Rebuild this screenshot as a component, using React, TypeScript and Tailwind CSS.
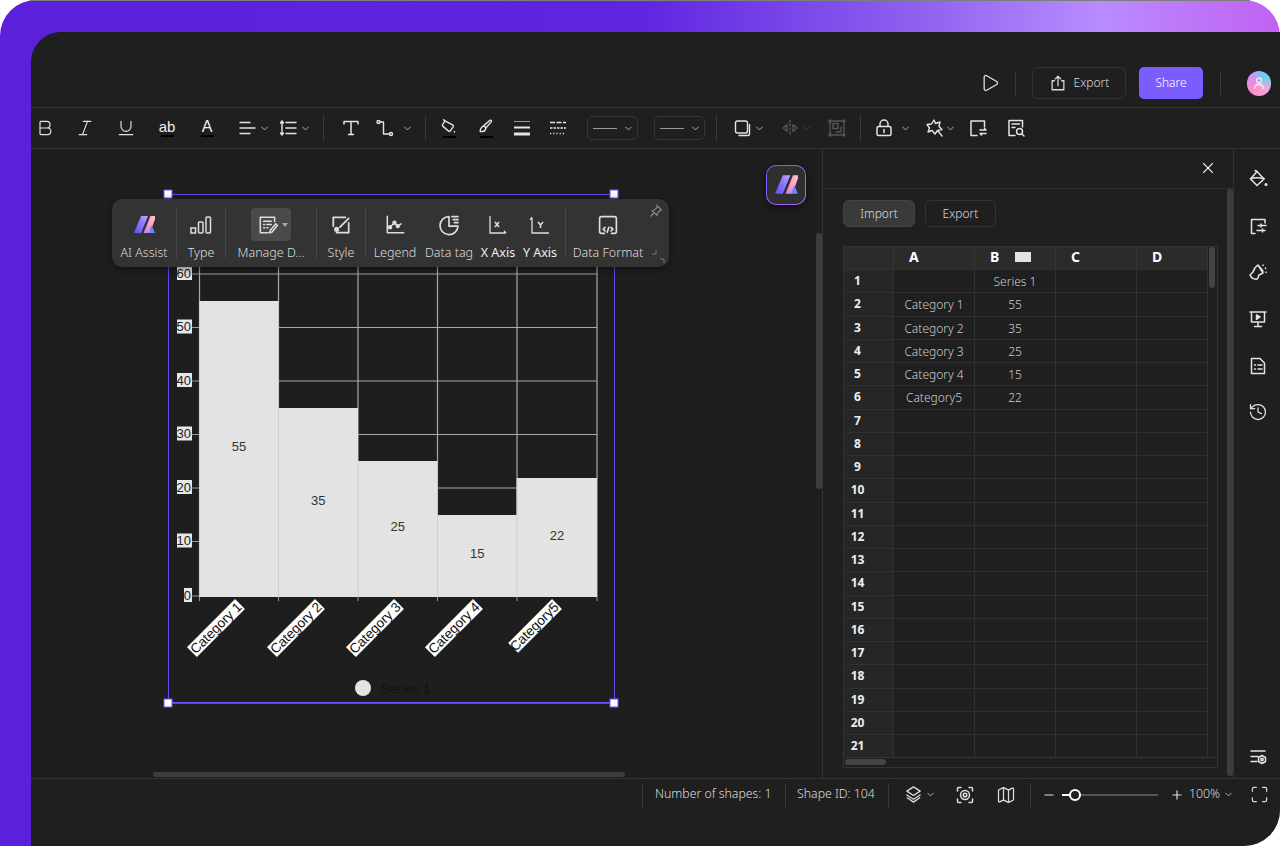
import React from "react";
import { Bold, Italic, Underline, ChevronDown, Play, X, History, Map as MapIcon, Plus, Minus, Maximize } from "lucide-react";

type P = { className?: string; children?: React.ReactNode; size?: number; sw?: number };
const S = ({ className = "", children, size = 20, sw = 1.4 }: P) => (
  <svg width={size} height={size} viewBox="0 0 20 20" fill="none" stroke="currentColor" strokeWidth={sw} strokeLinecap="round" strokeLinejoin="round" className={`shrink-0 ${className}`}>
    {children}
  </svg>
);
const Chev = ({ className = "" }: { className?: string }) => <ChevronDown size={11} strokeWidth={1.6} className={`shrink-0 ${className}`} />;

const Logo = ({ size = 24, id }: { size?: number; id: string }) => (
  <svg width={size} height={size} viewBox="4 4 24 24" className="shrink-0">
    <defs>
      <linearGradient id={`${id}a`} x1="0" y1="1" x2="1" y2="0"><stop offset="0" stopColor="#5a55f5" /><stop offset="0.6" stopColor="#8f7bff" /><stop offset="1" stopColor="#c9a4ff" /></linearGradient>
      <linearGradient id={`${id}b`} x1="0" y1="1" x2="1" y2="0"><stop offset="0" stopColor="#c47bf0" /><stop offset="0.5" stopColor="#ff9fc4" /><stop offset="1" stopColor="#ffc0cf" /></linearGradient>
    </defs>
    <polygon points="6,24 13,7 20,7 13,24" fill={`url(#${id}a)`} />
    <polygon points="15.500,24 22.500,7 27,7 27,10 22,24" fill={`url(#${id}b)`} />
    <polygon points="23.500,16 27,24 20.500,24" fill="#6d86ff" />
  </svg>
);

const Bar = ({ className = "" }: { className?: string }) => <div className={`w-px h-6 bg-[#3a3a3a] shrink-0 ${className}`} />;

function TopToolbar() {
  return (
    <div className="h-[41px] shrink-0 border-b border-[#333] flex items-center text-[#e4e4e4]">
      <Bold size={20} strokeWidth={1.4} className="ml-[4px] shrink-0" />
      <Italic size={20} strokeWidth={1.4} className="ml-[20px] shrink-0" />
      <Underline size={20} strokeWidth={1.4} className="ml-[21px] shrink-0" />
      <div className="ml-[21px] w-5 flex flex-col items-center shrink-0">
        <span className="text-[15px] leading-[15px] font-['Liberation_Sans',sans-serif] text-[#eee]">ab</span>
        <span className="w-[13px] h-[2px] bg-black mt-[1px]" />
      </div>
      <div className="ml-[20px] w-5 flex flex-col items-center shrink-0">
        <span className="text-[16px] leading-[15px] font-['Liberation_Sans',sans-serif] font-light text-[#eee]">A</span>
        <span className="w-[13px] h-[2px] bg-black mt-[1px]" />
      </div>
      <S className="ml-[21px]"><path d="M2 4.500h10M2 10h15M2 15.500h10" /></S>
      <Chev className="ml-[1px]" />
      <S className="ml-[8px]"><path d="M8 4.500h10M8 10h10M8 15.500h10M4 3v14M2.500 5 4 3l1.500 2M2.500 15 4 17l1.500-2" /></S>
      <Chev className="ml-[2px]" />
      <Bar className="ml-[12px]" />
      <S className="ml-[17px]" sw={1.5}><path d="M3 6V3.500h14V6M10 3.500v13M7.500 16.500h5" /></S>
      <S className="ml-[14px]"><circle cx="3.500" cy="4" r="1.500" /><circle cx="16" cy="16" r="1.500" /><path d="M5 4h3.500v12H14.500" /></S>
      <Chev className="ml-[7px]" />
      <Bar className="ml-[12px]" />
      <div className="ml-[13px] w-5 flex flex-col items-center shrink-0">
        <S size={18} sw={1.6}><path d="M6 3.500 14.500 8c.5.500.5 1 .2 1.500l-3.500 5c-.5.500-1 .5-1.500.2L3 9c-.5-.5-.5-1-.2-1.500L5 4c.2-.5.5-.7 1-.5zM6 3.500 4 2M16 15v.5" /></S>
        <span className="w-[13px] h-[2px] bg-black" />
      </div>
      <div className="ml-[17px] w-5 flex flex-col items-center shrink-0">
        <S size={18} sw={1.6}><path d="M14.500 2.500c1-.5 2 .5 1.500 1.500L10 11 7.500 8.500zM7.500 8.500 5 10.500c-1 1-1.500 2.500-1.500 4.500h3c1.500 0 3-1.500 3.500-4" /></S>
        <span className="w-[13px] h-[2px] bg-black" />
      </div>
      <svg width="20" height="20" viewBox="0 0 20 20" className="ml-[16px] shrink-0" fill="#e4e4e4"><rect x="2" y="3" width="16" height="1" fill="#999" /><rect x="2" y="8.500" width="16" height="2" /><rect x="2" y="14.500" width="16" height="3" /></svg>
      <svg width="20" height="20" viewBox="0 0 20 20" className="ml-[16px] shrink-0" fill="none" stroke="#e4e4e4"><path d="M2 4.500h16" strokeDasharray="5 1.500" strokeWidth="1.500" /><path d="M2 10h16" strokeDasharray="2.500 1" strokeWidth="1.500" /><path d="M2 15.500h16" strokeDasharray="1.200 2" strokeWidth="1.500" /></svg>
      <div className="ml-[19px] w-[51px] h-[24px] rounded-[5px] border border-[#353535] flex items-center justify-between pl-[5px] pr-[3px] shrink-0">
        <span className="w-[24px] h-px bg-[#999]" /><Chev />
      </div>
      <div className="ml-[16px] w-[51px] h-[24px] rounded-[5px] border border-[#353535] flex items-center justify-between pl-[5px] pr-[3px] shrink-0">
        <span className="w-[24px] h-px bg-[#999]" /><Chev />
      </div>
      <Bar className="ml-[11px]" />
      <S className="ml-[16px]"><rect x="2.500" y="3" width="12" height="12" rx="2" /><path d="M16.500 6.500V16a1.500 1.500 0 0 1-1.500 1.500H6" /></S>
      <Chev className="ml-[1px] mr-[15px]" />
      <S className="text-[#555]"><path d="M10 2v16" strokeDasharray="2 2" /><path d="M7 6.500v7L3 10zM13 6.500v7l4-3.500z" /></S>
      <Chev className="ml-[1px] text-[#555]" />
      <S className="ml-[15px] text-[#555]"><rect x="3" y="3" width="14" height="14" /><rect x="6" y="5.500" width="5" height="5" /><path d="M14 9v5H9" /><circle cx="3" cy="3" r="1" /><circle cx="17" cy="3" r="1" /><circle cx="3" cy="17" r="1" /><circle cx="17" cy="17" r="1" /></S>
      <Bar className="ml-[13px]" />
      <S className="ml-[13px]" sw={1.5}><rect x="3" y="8.500" width="14" height="9" rx="1.500" /><path d="M6 8.500V6a4 4 0 0 1 8 0v2.500M10 11.500v3" /></S>
      <Chev className="ml-[6px]" />
      <S className="ml-[14px]"><path d="m9 2 1.500 3.500L15 4l-1 4.500 3 3-4.500 1L10 16l-3-3.500L3 14l1.500-4L2 6.500l4.500-.5zM13 13l4 5" /></S>
      <Chev />
      <S className="ml-[12px]" sw={1.5}><path d="M16.500 9V3H3v14.500h6M12 12h6l-1.500-1.500M18 15.500h-6l1.500 1.500" /></S>
      <S className="ml-[18px]" sw={1.5}><path d="M9 17.500H3V2.500h13.500V9M6 6h7.500M6 9.500h3" /><circle cx="13.500" cy="13.500" r="3" /><path d="m16 16 2 2" /></S>
    </div>
  );
}

function FloatTool({ w, label, children, strong }: { w: string; label: string; children: React.ReactNode; strong?: boolean }) {
  return (
    <div className={`${w} flex flex-col items-center shrink-0`}>
      <div className="h-[33px] flex items-center justify-center">{children}</div>
      <span className={`mt-[3px] text-[12.500px] leading-[17px] whitespace-nowrap ${strong ? "font-normal text-[#eee]" : "font-light text-[#ddd]"}`}>{label}</span>
    </div>
  );
}

function FloatBar() {
  const d = <div className="w-px h-[50px] bg-[#474747] shrink-0" />;
  return (
    <div className="absolute left-[81px] top-[50px] w-[557px] h-[68px] rounded-[10px] bg-[#333333] shadow-[0_2px_8px_rgba(0,0,0,0.5)] flex items-start pt-[9px] text-[#ddd]">
      <FloatTool w="w-[64px]" label="AI Assist"><Logo id="f" size={24} /></FloatTool>
      {d}
      <FloatTool w="w-[48px]" label="Type">
        <svg width="24" height="24" viewBox="0 0 24 24" fill="none" stroke="currentColor" strokeWidth="1.500"><rect x="2" y="15" width="4.500" height="5" /><rect x="9.500" y="9" width="4.500" height="11" rx="1" /><rect x="17" y="4" width="4.500" height="16" rx="1" /></svg>
      </FloatTool>
      {d}
      <FloatTool w="w-[90px]" label="Manage D...">
        <div className="w-[40px] h-[33px] rounded-[4px] bg-[#4a4a4a] flex items-center pl-[6px] gap-[3px]">
          <S size={22}><path d="M16 7V3H3v14h7M6 6.500h7M6 9.500h1M9 9.500h4M6 12.500h1M9 12.500h1M12 15l5-6 1.500 1.500-5 6-2 .5z" /></S>
          <svg width="6" height="4" viewBox="0 0 6 4" fill="#aaa"><path d="M0 0h6L3 4z" /></svg>
        </div>
      </FloatTool>
      {d}
      <FloatTool w="w-[48px]" label="Style">
        <S size={22} sw={1.6}><path d="M14 3H3v8M6 17h11V8M17 4 9 12" /><circle cx="6" cy="14" r="1.500" fill="currentColor" /></S>
      </FloatTool>
      {d}
      <FloatTool w="w-[58px]" label="Legend">
        <S size={22}><path d="M3 2v15h15" /><path d="m5.500 12 4-4 3 3 3-2" /><circle cx="5.500" cy="12" r="1.300" fill="currentColor" /><circle cx="9.500" cy="8" r="1.300" fill="currentColor" /><circle cx="12.500" cy="11" r="1.300" fill="currentColor" /></S>
      </FloatTool>
      <FloatTool w="w-[50px]" label="Data tag">
        <S size={24} sw={1.4}><path d="M10 3a7.500 7.500 0 1 0 7.500 8H10zM12.500 3h5M13.500 5.500h4M14.500 8h3" /></S>
      </FloatTool>
      <FloatTool w="w-[48px]" label="X Axis" strong>
        <svg width="22" height="22" viewBox="0 0 22 22" fill="none" stroke="currentColor" strokeWidth="1.300"><path d="M3 2v17h16M17 17l2 2" /><path d="m8 8 4 5M12 8l-4 5" strokeWidth="1.600" /></svg>
      </FloatTool>
      <FloatTool w="w-[36px]" label="Y Axis" strong>
        <svg width="22" height="22" viewBox="0 0 22 22" fill="none" stroke="currentColor" strokeWidth="1.300"><path d="M3 4v15h17M1 6l2-3" /><path d="m9 8 2.500 3L14 8M11.500 11v3" strokeWidth="1.600" /></svg>
      </FloatTool>
      <div className="w-[7px] shrink-0" />
      {d}
      <FloatTool w="w-[84px]" label="Data Format">
        <S size={24}><path d="M7 17H4.500C3.500 17 3 16.500 3 15.500V4.500C3 3.500 3.500 3 4.500 3H15.500C16.500 3 17 3.500 17 4.500V15.500C17 16.500 16.500 17 15.500 17H13" /><path d="m7.500 12-1.500 1.500L7.500 15M12.500 12l1.500 1.500-1.500 1.500M10.700 12l-1.400 4" /></S>
      </FloatTool>
      <svg width="14" height="14" viewBox="0 0 14 14" fill="none" stroke="#888" strokeWidth="1.100" className="absolute right-[6px] top-[5px]"><path d="m8 1.500 4.500 4.500-1.500.5-2.500 2.500-.5 2.500L3 6.500l2.500-.5L8 3.500zM5 9l-3.500 3.500" /></svg>
      <svg width="14" height="14" viewBox="0 0 14 14" fill="none" stroke="#777" strokeWidth="1" className="absolute right-[4px] bottom-[3px]"><path d="M1 4h4V0M13 13V9h-4" /></svg>
    </div>
  );
}

function Chart() {
  const ys: [number, number][] = [[60, 274], [50, 327.500], [40, 381], [30, 434.500], [20, 488], [10, 541.500], [0, 596]];
  const bars = [
    { x: 199.500, w: 79, top: 301, v: "55", c: "Category 1", lx: 240 },
    { x: 278.500, w: 79.500, top: 408, v: "35", c: "Category 2", lx: 320 },
    { x: 358, w: 79.500, top: 461, v: "25", c: "Category 3", lx: 399 },
    { x: 437.500, w: 79.500, top: 515, v: "15", c: "Category 4", lx: 478 },
    { x: 517, w: 80, top: 478, v: "22", c: "Category5", lx: 557 },
  ];
  const f = { fontFamily: "'Liberation Sans', sans-serif" };
  return (
    <svg width="460" height="524" viewBox="161 187 460 524" className="absolute left-[130px] top-[38px]" style={f}>
      <path d="M168.500 194.500H614.500V702.500H168.500Z" fill="none" stroke="#6548ea" strokeWidth="1" />
      <path d="M168.500 703H614.500" stroke="#6f55ff" strokeWidth="1.500" />
      {ys.slice(0, 6).map(([v, y]) => <line key={v} x1="199" x2="597" y1={y} y2={y} stroke="#a8a8a8" strokeWidth="1.200" />)}
      {[199.500, 278.500, 358, 437.500, 517, 597].map((x) => <line key={x} x1={x} x2={x} y1="267" y2="597" stroke="#a8a8a8" strokeWidth="1.200" />)}
      {bars.map((b) => (
        <g key={b.c}>
          <rect x={b.x} y={b.top} width={b.w} height={597 - b.top} fill="#e3e3e3" />
          <line x1={b.x} x2={b.x} y1={b.top} y2="597" stroke="#cfcfcf" />
          <text x={b.x + b.w / 2} y={b.top + (597 - b.top) / 2 + 2} textAnchor="middle" fontSize="13" fill="#333">{b.v}</text>
          <line x1={b.x} x2={b.x} y1="597" y2="601" stroke="#999" />
          <g transform={`translate(${b.lx} 604) rotate(-45)`}>
            <rect x={b.c.length === 10 ? -68 : -62} y="-7" width={b.c.length === 10 ? 68 : 62} height="14" fill="#fff" />
            <text x="-1" y="4.500" textAnchor="end" fontSize="13.500" fill="#111">{b.c}</text>
          </g>
        </g>
      ))}
      <line x1="597" x2="597" y1="597" y2="601" stroke="#999" />
      {ys.map(([v, y]) => (
        <g key={v}>
          <rect x={v === 0 ? 184 : 177} y={y - 8} width={v === 0 ? 8 : 15} height="14" fill="#e8e8e8" />
          <text x="191" y={y + 3.500} textAnchor="end" fontSize="13" fill="#222">{v}</text>
          <line x1="192" x2="199" y1={y} y2={y} stroke="#999" />
        </g>
      ))}
      <circle cx="363" cy="688" r="8" fill="#e4e4e4" />
      <text x="381" y="693" fontSize="13.500" fill="#111">Series 1</text>
      {[[168, 194], [614, 194], [168, 703], [614, 703]].map(([x, y]) => (
        <rect key={`${x}${y}`} x={x - 4} y={y - 4} width="8" height="8" fill="#fff" stroke="#6f55ff" strokeWidth="1" />
      ))}
    </svg>
  );
}

const rows: string[][] = [["", "Series 1"], ["Category 1", "55"], ["Category 2", "35"], ["Category 3", "25"], ["Category 4", "15"], ["Category5", "22"]];

function Sheet() {
  const nums = Array.from({ length: 21 }, (_, i) => i + 1);
  return (
    <div className="mt-[19px] ml-[20px] w-[375px] h-[522px] border border-[#333] relative overflow-hidden">
      <div className="flex h-[23px] bg-[#2b2b2b] border-b border-[#333] text-white font-bold text-[14px] leading-[20px]">
        <div className="w-[50px] border-r border-[#333]" />
        {["A", "B", "C", "D"].map((c) => (
          <div key={c} className={`${c === "D" ? "w-[71px]" : "w-[81px] border-r border-[#333]"} pl-[15px] relative`}>
            {c}
            {c === "B" && <span className="absolute left-[40px] top-[5px] w-[16px] h-[10px] bg-[#e4e4e4]" />}
          </div>
        ))}
      </div>
      {nums.map((n) => (
        <div key={n} className="flex h-[23.250px] border-b border-[#303030] text-[12px] leading-[21px] text-[#ccc] font-light">
          <div className="w-[50px] bg-[#262626] border-r border-[#333] pr-[22px] text-center font-bold text-[#eee]">{n}</div>
          <div className="w-[81px] border-r border-[#303030] text-center pt-[1px]">{rows[n - 1]?.[0]}</div>
          <div className="w-[81px] border-r border-[#303030] text-center pt-[1px]">{rows[n - 1]?.[1]}</div>
          <div className="w-[81px] border-r border-[#303030]" />
          <div className="w-[71px] border-r border-[#303030]" />
        </div>
      ))}
      <div className="absolute left-0 right-0 bottom-0 h-[10px] bg-[#1f1f1f] border-t border-[#333]">
        <div className="ml-[1px] mt-[1px] w-[41px] h-[6px] rounded-[3px] bg-[#444]" />
      </div>
      <div className="absolute right-0 top-0 w-[10px] bottom-[10px] bg-[#1f1f1f] border-l border-[#333]">
        <div className="ml-[1px] w-[6px] h-[41px] rounded-[3px] bg-[#444]" />
      </div>
    </div>
  );
}

function Rail() {
  return (
    <div className="w-[47px] shrink-0 border-l border-[#333] flex flex-col items-center pl-[1px] pt-[20px] pb-[11px] text-[#e4e4e4]">
      <div className="flex flex-col gap-[26.700px]">
        <S sw={1.500}><path d="M9 2.500 2.500 10l6.500 6.500L16 10z" /><path d="M3 9.500c3-1 8-1 13 0" /><path d="M7 1.500l2 1" /><circle cx="18" cy="15.500" r=".8" fill="currentColor" /></S>
        <S sw={1.500}><path d="M17 7V3.500H3.500v14H7M10 9.500h8M13 8v3M9 14.500h8M14.500 13v3" /></S>
        <S sw={1.500}><path d="M10 3c-3 2-4.500 5-5 7l-3 3 2 3c2 .5 3 2 5 1s1-3 2-4l4-2zM10 3l5 6M15 3v.5M17.500 6v.5M18 10v.5" /></S>
        <S sw={1.500}><path d="M2 3h16M3.500 3v10h13V3M10 13v4M6.500 17.500h7" /><path d="M8.500 6v4.500L12 8z" fill="currentColor" /></S>
        <S sw={1.500}><path d="M3.500 2.500H12L16.500 7v10.500h-13z" /><path d="M6.500 9h1M10 9h4M6.500 13h1M10 13h4" /></S>
        <History size={20} strokeWidth={1.500} />
      </div>
      <div className="mt-auto">
        <S sw={1.500}><path d="M3 4h14M3 9.500h7M3 14.500h6" /><path d="m14 8.500 3.500 2v4l-3.500 2-3.500-2v-4z" /><circle cx="14" cy="12.500" r="1.200" /></S>
      </div>
    </div>
  );
}

function Status() {
  return (
    <div className="h-[68px] shrink-0 border-t border-[#333] flex items-start text-[#ddd] text-[12.300px] font-light">
      <div className="h-[31px] flex items-center w-full">
        <Bar className="ml-[611px]" />
        <span className="ml-[12px] w-[117px] whitespace-nowrap">Number of shapes: 1</span>
        <Bar className="ml-[13px]" />
        <span className="ml-[11px] w-[79px] whitespace-nowrap">Shape ID: 104</span>
        <Bar className="ml-[12px]" />
        <S className="ml-[15px]" size={19}><path d="m10 2 7 4.500-7 4.500-7-4.500zM3 10.500l7 4.500 7-4.500M3.500 13.500 10 18l6.500-4.500" /></S>
        <Chev className="ml-[2px]" />
        <S className="ml-[19px]" sw={1.500}><path d="M6 2.500H3.500a1 1 0 0 0-1 1V6M14 2.500h2.500a1 1 0 0 1 1 1V6M6 17.500H3.500a1 1 0 0 1-1-1V14M14 17.500h2.500a1 1 0 0 0 1-1V14" /><circle cx="10" cy="10" r="4.500" /><circle cx="10" cy="10" r="1.800" /></S>
        <MapIcon size={20} strokeWidth={1.500} className="ml-[21px] shrink-0" />
        <Bar className="ml-[14px]" />
        <Minus size={14} strokeWidth={2} className="ml-[11px] shrink-0" />
        <div className="ml-[6px] w-[96px] h-[2px] bg-[#555] relative shrink-0">
          <div className="absolute left-0 top-0 w-[10px] h-[2px] bg-white" />
          <div className="absolute left-[7px] top-[-5px] w-[12px] h-[12px] rounded-full border-2 border-white bg-[#1f1f1f]" />
        </div>
        <Plus size={14} strokeWidth={2} className="ml-[12px] shrink-0" />
        <span className="ml-[5px] w-[31px] whitespace-nowrap">100%</span>
        <Chev className="ml-[3px]" />
        <Maximize size={19} strokeWidth={1.500} className="ml-[16px] shrink-0" />
      </div>
    </div>
  );
}

export default function App() {
  return (
    <div className="relative w-[1280px] h-[846px] bg-white overflow-hidden font-['Noto_Sans',sans-serif]">
      <div className="w-full h-full rounded-tl-[36px] rounded-tr-[36px] rounded-br-[36px] bg-[linear-gradient(90deg,#5a20dc_0%,#5f25e0_50%,#8f62f0_72%,#b88cff_86%,#c261f3_100%)] pl-[31px] pt-[32px]">
        <div className="w-full h-full rounded-tl-[30px] rounded-br-[36px] bg-[#1f1f1f] flex flex-col overflow-hidden">
          <header className="h-[76px] shrink-0 border-b border-[#333] flex items-center text-[#e4e4e4] pt-[27px] pb-0">
            <Play size={20} strokeWidth={1.500} className="ml-[949px] shrink-0" />
            <Bar className="ml-[15px]" />
            <button className="ml-[16px] w-[94px] h-[32px] rounded-[6px] border border-[#333] flex items-center justify-center gap-[7px] text-[12px] font-light text-[#ddd]">
              <S size={18}><path d="M6 7.500H3.500v10h13v-10H14M10 13V2.500M7 5.500l3-3 3 3" /></S>
              Export
            </button>
            <button className="ml-[13px] w-[64px] h-[32px] rounded-[5px] bg-[#7b5cff] text-[12px] font-light text-white">Share</button>
            <Bar className="ml-[17px]" />
            <div className="ml-[26px] w-[24px] h-[25px] rounded-full bg-[conic-gradient(from_40deg,#63d5e8,#f3a6dd,#ff8fc9,#d68cf2,#63d5e8)] flex items-center justify-center shrink-0">
              <svg width="14" height="14" viewBox="0 0 14 14" fill="none" stroke="#ffe3f1" strokeWidth="1.300"><circle cx="7" cy="4.500" r="2.500" /><path d="M2.500 13c0-3 2-4.500 4.500-4.500s4.500 1.500 4.500 4.500" /></svg>
            </div>
          </header>
          <TopToolbar />
          <div className="flex-1 flex min-h-0">
            <main className="w-[791px] shrink-0 relative overflow-hidden bg-[#1e1e1e]">
              <Chart />
              <FloatBar />
              <div className="absolute left-[735px] top-[16px] w-[40px] h-[40px] rounded-[10px] p-[1px] bg-[linear-gradient(135deg,#6d5cff,#c064f0)] shadow-[0_2px_8px_rgba(0,0,0,0.6)]">
                <div className="w-full h-full rounded-[9px] bg-[#2f2f2f] flex items-center justify-center"><Logo id="g" size={26} /></div>
              </div>
              <div className="absolute left-[785px] top-[84px] w-[6px] h-[256px] rounded-[3px] bg-[#3d3d3d]" />
              <div className="absolute left-[122px] bottom-[1px] w-[472px] h-[5px] rounded-[3px] bg-[#3d3d3d]" />
            </main>
            <aside className="w-[411px] shrink-0 border-l border-[#333] relative flex flex-col overflow-hidden">
              <div className="h-[40px] shrink-0 border-b border-[#2e2e2e] flex items-center justify-end pr-[16px] pb-[1px] text-[#e4e4e4]">
                <X size={18} strokeWidth={1.500} />
              </div>
              <div className="flex gap-[10px] ml-[20px] mt-[11px] text-[12px] font-light text-[#ddd]">
                <button className="w-[72px] h-[27px] rounded-[6px] bg-[#3a3a3a] border border-[#444] pt-[1px]">Import</button>
                <button className="w-[71px] h-[27px] rounded-[6px] border border-[#333] pt-[1px]">Export</button>
              </div>
              <Sheet />
              <div className="absolute right-0 top-[40px] bottom-[2px] w-[6px] rounded-[3px] bg-[#3d3d3d]" />
            </aside>
            <Rail />
          </div>
          <Status />
        </div>
      </div>
      <div className="absolute left-[30px] right-[30px] top-0 h-px bg-[#7d7d7d]" />
    </div>
  );
}
